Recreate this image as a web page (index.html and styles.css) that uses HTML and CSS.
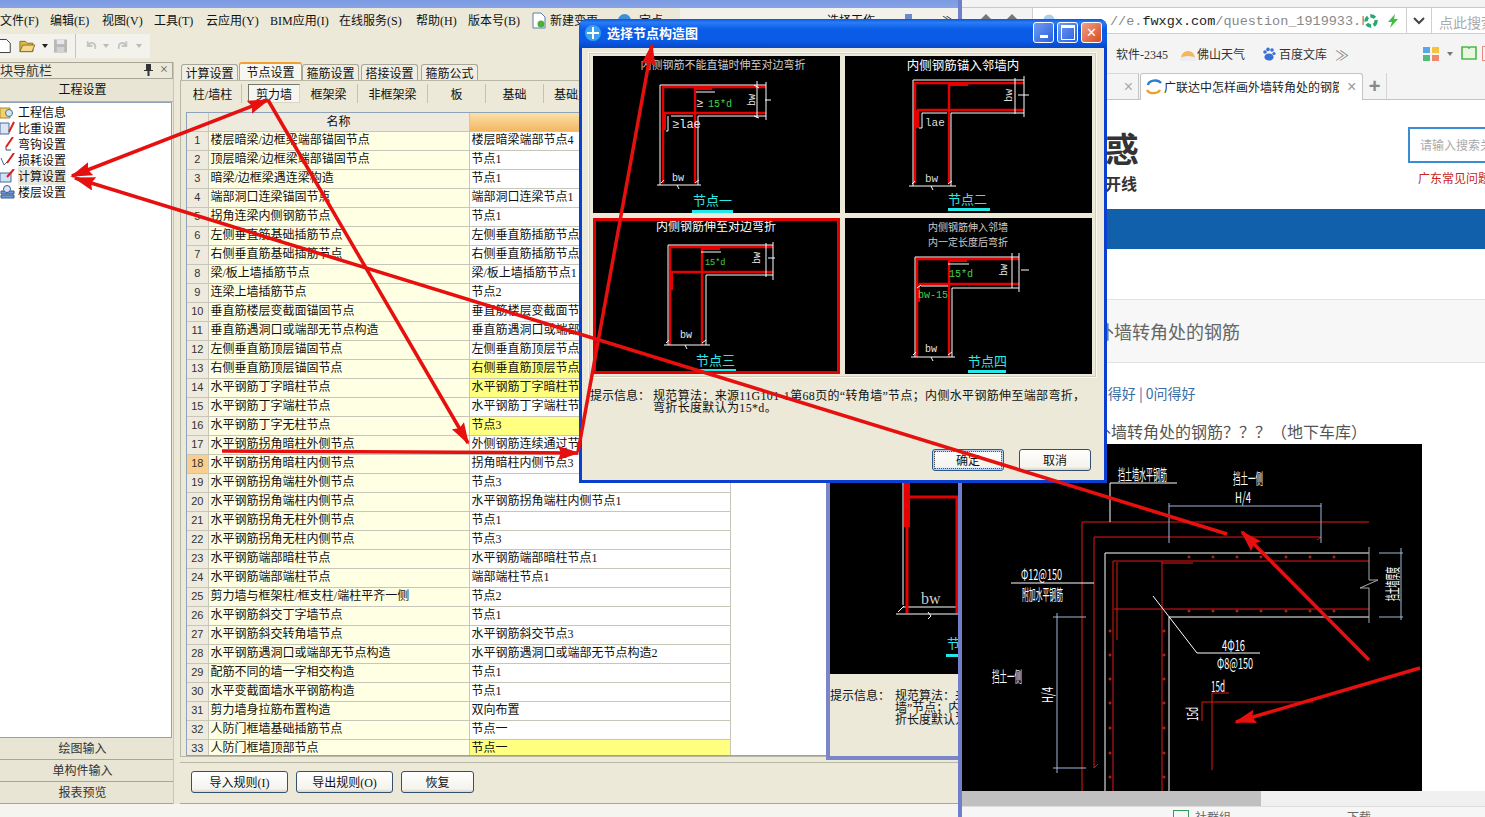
FILE: index.html
```html
<!DOCTYPE html>
<html lang="zh">
<head>
<meta charset="utf-8">
<title>选择节点构造图</title>
<link rel="stylesheet" href="styles.css">
</head>
<body>
<div class="desk">

<section class="browser">
  <div class="b-top"></div>
  <div class="b-addr">
    <div class="b-nav"><span class="b-nav-i"></span><span class="b-nav-i"></span></div>
    <div class="b-url"><svg class="u-fav" width="12" height="12" viewBox="0 0 12 12"><circle cx="6" cy="6" r="5.500" fill="#a9d0ee"/></svg><span class="u-g">//e.</span><span class="u-d">fwxgx.com</span><span class="u-g">/question_1919933.h</span>
      <svg class="u-ic" width="14" height="14" viewBox="0 0 14 14"><circle cx="7" cy="7" r="5" fill="none" stroke="#2aa772" stroke-width="3.4" stroke-dasharray="5 2.4"/></svg>
      <svg class="u-ic2" width="12" height="14" viewBox="0 0 12 14"><path d="M8 0 1 8h4l-2 6 8-9H7z" fill="#3fbf3f"/></svg>
    </div>
    <div class="b-drop"><svg width="12" height="8" viewBox="0 0 12 8"><path d="M1 1l5 5 5-5" fill="none" stroke="#444" stroke-width="2"/></svg></div>
    <div class="b-search">点此搜索</div>
  </div>
  <div class="b-marks">
    <span class="m-soft">软件-2345</span>
    <svg class="m-ic" width="16" height="16" viewBox="0 0 16 16"><path d="M1 12a7 7 0 0 1 14 0z" fill="#f7b65a"/><path d="M0 12q8-4 16 0v3H0z" fill="#e8eef4"/></svg>
    <span class="m-w">佛山天气</span>
    <svg class="m-ic2" width="14" height="14" viewBox="0 0 14 14"><g fill="#3a6fd8"><circle cx="3" cy="5" r="1.8"/><circle cx="6" cy="2.4" r="1.8"/><circle cx="10" cy="3" r="1.8"/><circle cx="12" cy="6.5" r="1.6"/><ellipse cx="7" cy="10" rx="4.6" ry="3.6"/></g></svg>
    <span class="m-w">百度文库</span>
    <span class="m-more">≫</span>
    <svg class="m-apps" width="18" height="16" viewBox="0 0 18 16"><rect x="0" y="1" width="7" height="6" fill="#59a7e8"/><rect x="9" y="1" width="7" height="6" fill="#f5c33c"/><rect x="0" y="9" width="7" height="6" fill="#52bd7a"/><rect x="9" y="9" width="7" height="6" fill="#f08a6a"/></svg>
    <span class="m-caret"></span>
    <svg class="m-book" width="16" height="15" viewBox="0 0 16 15"><path d="M1 1h6l1 1 1-1h6v12H1z" fill="#e8f8e0" stroke="#4cb648" stroke-width="1.6"/></svg>
    <span class="m-red"></span>
  </div>
  <div class="b-tabs">
    <div class="t-old">×</div>
    <div class="t-cur">
      <svg width="16" height="16" viewBox="0 0 16 16"><path d="M2 6a7 5 0 0 1 13-2" fill="none" stroke="#2a7fc8" stroke-width="2.4"/><path d="M1 11a7 5 0 0 0 13 0" fill="none" stroke="#e8a030" stroke-width="2.4"/></svg>
      <span class="t-title">广联达中怎样画外墙转角处的钢筋</span>
      <span class="t-x">×</span>
    </div>
    <div class="t-plus">+</div>
  </div>
  <div class="b-page">
    <div class="p-head">
      <div class="p-logo"><div class="p-big">惑</div><div class="p-sub">开线</div></div>
      <div class="p-find"><div class="p-box">请输入搜索关键词</div><div class="p-hot">广东常见问题</div></div>
    </div>
    <div class="p-bar"></div>
    <div class="p-title">外墙转角处的钢筋</div>
    <div class="p-stat">0问得好 | 0问得好</div>
    <div class="p-q">外墙转角处的钢筋？？？（地下车库）</div>
    <svg class="cad" width="460" height="347" viewBox="962 444 460 347">
      <rect x="962" y="444" width="460" height="347" fill="#000"/>
      <g class="cr">
        <path d="M1082 791V522H1369"/>
        <path d="M1094 768V537H1321M1094 768l4-4M1321 537l-4 3"/>
        <path d="M1113 791V561H1369"/>
        <path d="M1162 791V561"/>
        <path d="M1114 609H1369"/>
        <path d="M1117 562V640"/>
        <path d="M1162 563H1193"/>
        <path d="M1229 693H1212V770"/>
        <path d="M1202 721V702H1313"/>
      </g>
      <g class="cdots">
        <circle cx="1189" cy="557" r="1"/><circle cx="1213" cy="557" r="1"/><circle cx="1237" cy="557" r="1"/><circle cx="1261" cy="557" r="1"/><circle cx="1286" cy="557" r="1"/><circle cx="1310" cy="557" r="1"/><circle cx="1334" cy="557" r="1"/>
        <circle cx="1189" cy="611" r="1"/><circle cx="1213" cy="611" r="1"/><circle cx="1237" cy="611" r="1"/><circle cx="1261" cy="611" r="1"/><circle cx="1286" cy="611" r="1"/><circle cx="1310" cy="611" r="1"/><circle cx="1334" cy="611" r="1"/>
        <circle cx="1110" cy="631" r="1"/><circle cx="1110" cy="655" r="1"/><circle cx="1110" cy="679" r="1"/><circle cx="1110" cy="703" r="1"/><circle cx="1110" cy="728" r="1"/><circle cx="1110" cy="753" r="1"/><circle cx="1110" cy="777" r="1"/>
        <circle cx="1164" cy="631" r="1"/><circle cx="1164" cy="655" r="1"/><circle cx="1164" cy="679" r="1"/><circle cx="1164" cy="703" r="1"/><circle cx="1164" cy="728" r="1"/><circle cx="1164" cy="753" r="1"/><circle cx="1164" cy="777" r="1"/>
      </g>
      <g class="cw">
        <path d="M1105 791V553H1369"/>
        <path d="M1169 791V617H1369"/>
        <path d="M1177 483H1110V522"/>
        <path d="M1011 583H1094"/>
        <path d="M1153 596L1197 653H1260"/>
      </g>
      <g class="cb">
        <path d="M1169 506H1321M1169 503V543M1321 503V543"/>
        <path d="M1379 553H1403M1379 617H1403M1401 548V620"/>
        <path d="M1053 617H1086M1053 768H1086M1057 613V773"/>
      </g>
      <path class="cg" d="M1369 547V580H1378L1360 588H1369V623"/>
      <g class="ct">
        <text x="1118" y="480" textLength="49" lengthAdjust="spacingAndGlyphs">挡土墙水平钢筋</text>
        <text x="1233" y="484" textLength="30" lengthAdjust="spacingAndGlyphs">挡土一侧</text>
        <text x="1235" y="503" textLength="16" lengthAdjust="spacingAndGlyphs">H/4</text>
        <text x="1021" y="580" textLength="41" lengthAdjust="spacingAndGlyphs">Φ12@150</text>
        <text x="1022" y="600" textLength="41" lengthAdjust="spacingAndGlyphs">附加水平钢筋</text>
        <text x="992" y="682" textLength="30" lengthAdjust="spacingAndGlyphs">挡土一侧</text>
        <text x="1222" y="651" textLength="23" lengthAdjust="spacingAndGlyphs">4Φ16</text>
        <text x="1217" y="669" textLength="36" lengthAdjust="spacingAndGlyphs">Φ8@150</text>
        <text x="1211" y="692" textLength="14" lengthAdjust="spacingAndGlyphs">15d</text>
        <text transform="translate(1053 703) rotate(-90)" textLength="16" lengthAdjust="spacingAndGlyphs">H/4</text>
        <text transform="translate(1198 721) rotate(-90)" textLength="14" lengthAdjust="spacingAndGlyphs">15d</text>
        <text transform="translate(1398 601) rotate(-90)" textLength="34" lengthAdjust="spacingAndGlyphs">挡土墙厚度</text>
      </g>
    </svg>
    <div class="p-scroll"><div class="p-thumb"></div></div>
    <div class="p-status"><span class="s-box"></span><span>社群组</span><span class="s-gap">下载</span></div>
  </div>
</section>

<section class="app">
  <div class="a-title"></div>
  <div class="a-menu">
    <span>文件(F)</span><span>编辑(E)</span><span>视图(V)</span><span>工具(T)</span><span>云应用(Y)</span><span>BIM应用(I)</span><span>在线服务(S)</span><span>帮助(H)</span><span>版本号(B)</span>
    <span class="a-new"><svg width="14" height="17" viewBox="0 0 14 17"><path d="M1 1h8l4 4v11H1z" fill="#fff" stroke="#5a7fb0"/><circle cx="9" cy="12" r="3.5" fill="#4cae3c"/></svg>新建变更</span>
    <span class="a-cloud"><i></i>定点</span>
    <div class="a-strip"><span>选择工作</span><b></b><span>≫</span></div>
  </div>
  <div class="a-tools">
    <div class="a-tbar">
      <svg width="12" height="16" viewBox="0 0 12 16"><path d="M-2 1h9l4 4v10H-2z" fill="#fff" stroke="#333"/></svg>
      <svg class="t-open" width="18" height="16" viewBox="0 0 18 16"><path d="M1 3h6l2 2h6v9H1z" fill="#e0b850" stroke="#8a6a20"/><path d="M4 7h13l-3 7H1z" fill="#f4d98a" stroke="#8a6a20"/></svg>
      <span class="t-caret"></span>
      <svg class="t-save" width="14" height="14" viewBox="0 0 14 14"><path d="M0 0h14v14H0z" fill="#b8b8b8"/><path d="M3 0h8v5H3z" fill="#e6e6e6"/><path d="M3 8h8v6H3z" fill="#d2d2d2"/></svg>
      <span class="t-sep"></span>
      <svg class="t-undo" width="14" height="14" viewBox="0 0 14 14"><path d="M4 2v5h5M4 7c3-5 9-4 8 3" fill="none" stroke="#c4c4c4" stroke-width="2"/></svg>
      <span class="t-caret t-off"></span>
      <svg class="t-undo" width="14" height="14" viewBox="0 0 14 14"><path d="M10 2v5H5M10 7C7 2 1 3 2 10" fill="none" stroke="#c4c4c4" stroke-width="2"/></svg>
      <span class="t-caret t-off"></span>
    </div>
  </div>
  <div class="a-body">
    <aside class="nav">
      <div class="nav-h"><span>模块导航栏</span>
        <svg class="nav-pin" width="9" height="12" viewBox="0 0 9 12"><path d="M2 0h5v6h2v1H5.500v5h-2V7H0V6h2z" fill="#333"/></svg>
        <span class="nav-x">×</span></div>
      <div class="nav-sec">工程设置</div>
      <ul class="nav-list">
        <li><svg width="15" height="14" viewBox="0 0 15 14"><path d="M0 3h10v10H0z" fill="#f3d26c" stroke="#a88a30"/><circle cx="9" cy="8" r="3.5" fill="#cfe4f5" stroke="#55708a"/></svg>工程信息</li>
        <li><svg width="15" height="14" viewBox="0 0 15 14"><path d="M0 2h9v11H0z" fill="#dde6f2" stroke="#4a6a9a"/><path d="M14 1 9 11" stroke="#d82020" stroke-width="2"/></svg>比重设置</li>
        <li><svg width="15" height="14" viewBox="0 0 15 14"><path d="M6 10v3h5" fill="none" stroke="#456"/><path d="M13 0 6 10" stroke="#d82020" stroke-width="2"/></svg>弯钩设置</li>
        <li><svg width="15" height="14" viewBox="0 0 15 14"><path d="M1 5l3 7 4-4" fill="none" stroke="#4a6a9a"/><path d="M14 0 7 10" stroke="#d82020" stroke-width="2"/></svg>损耗设置</li>
        <li class="nav-on"><svg width="15" height="14" viewBox="0 0 15 14"><path d="M0 4h11v9H0z" fill="#cfe2f5" stroke="#4a6a9a"/><path d="M14 0 7 8" stroke="#d82020" stroke-width="2"/></svg><span>计算设置</span></li>
        <li><svg width="15" height="14" viewBox="0 0 15 14"><path d="M1 6h13v3H1zM1 10h13v3H1z" fill="#6f9ad8" stroke="#3a5a90"/><circle cx="7" cy="4" r="3.5" fill="#d8e6f8" stroke="#3a5a90"/></svg>楼层设置</li>
      </ul>
      <div class="nav-tabs"><div>绘图输入</div><div>单构件输入</div><div>报表预览</div></div>
    </aside>
    <main class="work">
      <div class="w-tabs">
        <span class="w-tab">计算设置</span><span class="w-tab w-cur">节点设置</span><span class="w-tab">箍筋设置</span><span class="w-tab">搭接设置</span><span class="w-tab">箍筋公式</span>
      </div>
      <div class="w-panel">
        <div class="w-sub">
          <span>柱/墙柱</span><span class="w-sub-on">剪力墙</span><span>框架梁</span><span class="w-wide">非框架梁</span><span>板</span><span>基础</span><span>基础主梁</span>
        </div>
        <div class="w-grid">
          <table class="rules">
            <colgroup><col class="c1"><col class="c2"><col class="c3"></colgroup>
            <thead><tr><th></th><th>名称</th><th class="h-sel"></th></tr></thead>
            <tbody>
              <tr><td>1</td><td>楼层暗梁/边框梁端部锚固节点</td><td>楼层暗梁端部节点4</td></tr>
              <tr><td>2</td><td>顶层暗梁/边框梁端部锚固节点</td><td>节点1</td></tr>
              <tr><td>3</td><td>暗梁/边框梁遇连梁构造</td><td>节点1</td></tr>
              <tr><td>4</td><td>端部洞口连梁锚固节点</td><td>端部洞口连梁节点1</td></tr>
              <tr><td>5</td><td>拐角连梁内侧钢筋节点</td><td>节点1</td></tr>
              <tr><td>6</td><td>左侧垂直筋基础插筋节点</td><td>左侧垂直筋插筋节点</td></tr>
              <tr><td>7</td><td>右侧垂直筋基础插筋节点</td><td>右侧垂直筋插筋节点</td></tr>
              <tr><td>8</td><td>梁/板上墙插筋节点</td><td>梁/板上墙插筋节点1</td></tr>
              <tr><td>9</td><td>连梁上墙插筋节点</td><td>节点2</td></tr>
              <tr><td>10</td><td>垂直筋楼层变截面锚固节点</td><td>垂直筋楼层变截面节点</td></tr>
              <tr><td>11</td><td>垂直筋遇洞口或端部无节点构造</td><td>垂直筋遇洞口或端部无节点</td></tr>
              <tr><td>12</td><td>左侧垂直筋顶层锚固节点</td><td>左侧垂直筋顶层节点</td></tr>
              <tr class="r-y"><td>13</td><td>右侧垂直筋顶层锚固节点</td><td>右侧垂直筋顶层节点</td></tr>
              <tr class="r-y"><td>14</td><td>水平钢筋丁字暗柱节点</td><td>水平钢筋丁字暗柱节点</td></tr>
              <tr><td>15</td><td>水平钢筋丁字端柱节点</td><td>水平钢筋丁字端柱节点</td></tr>
              <tr class="r-y"><td>16</td><td>水平钢筋丁字无柱节点</td><td>节点3</td></tr>
              <tr><td>17</td><td>水平钢筋拐角暗柱外侧节点</td><td>外侧钢筋连续通过节点</td></tr>
              <tr class="r-cur"><td>18</td><td>水平钢筋拐角暗柱内侧节点</td><td>拐角暗柱内侧节点3</td></tr>
              <tr><td>19</td><td>水平钢筋拐角端柱外侧节点</td><td>节点3</td></tr>
              <tr><td>20</td><td>水平钢筋拐角端柱内侧节点</td><td>水平钢筋拐角端柱内侧节点1</td></tr>
              <tr><td>21</td><td>水平钢筋拐角无柱外侧节点</td><td>节点1</td></tr>
              <tr><td>22</td><td>水平钢筋拐角无柱内侧节点</td><td>节点3</td></tr>
              <tr><td>23</td><td>水平钢筋端部暗柱节点</td><td>水平钢筋端部暗柱节点1</td></tr>
              <tr><td>24</td><td>水平钢筋端部端柱节点</td><td>端部端柱节点1</td></tr>
              <tr><td>25</td><td>剪力墙与框架柱/框支柱/端柱平齐一侧</td><td>节点2</td></tr>
              <tr><td>26</td><td>水平钢筋斜交丁字墙节点</td><td>节点1</td></tr>
              <tr><td>27</td><td>水平钢筋斜交转角墙节点</td><td>水平钢筋斜交节点3</td></tr>
              <tr><td>28</td><td>水平钢筋遇洞口或端部无节点构造</td><td>水平钢筋遇洞口或端部无节点构造2</td></tr>
              <tr><td>29</td><td>配筋不同的墙一字相交构造</td><td>节点1</td></tr>
              <tr><td>30</td><td>水平变截面墙水平钢筋构造</td><td>节点1</td></tr>
              <tr><td>31</td><td>剪力墙身拉筋布置构造</td><td>双向布置</td></tr>
              <tr><td>32</td><td>人防门框墙基础插筋节点</td><td>节点一</td></tr>
              <tr class="r-y"><td>33</td><td>人防门框墙顶部节点</td><td>节点一</td></tr>
            </tbody>
          </table>
        </div>
      </div>
      <div class="w-foot">
        <button class="xp-btn b-a">导入规则(I)</button><button class="xp-btn b-a">导出规则(O)</button><button class="xp-btn b-c">恢复</button>
      </div>
    </main>
  </div>
  <div class="a-status"></div>

  <div class="back-dlg">
    <svg class="back-pic" width="128" height="274" viewBox="830 400 128 274">
      <rect x="830" y="400" width="128" height="274" fill="#000"/>
      <path class="n-w" d="M903 400V605M903 607H958M896 614H958M898 612l6-6M928 612l3 4-3 3"/>
      <path d="M907 400V527" stroke="#e60000" stroke-width="6"/>
      <path d="M907 527V613M910 497H958M957 497V613" stroke="#e60000" stroke-width="3" fill="none"/>
      <text class="n-lat-b" x="921" y="604">bw</text>
      <text class="n-lab" x="947" y="648">节点</text>
      <rect x="946" y="654" width="12" height="3" fill="#22e8e8"/>
    </svg>
    <div class="back-hint">
      <span class="back-l">提示信息：</span>
      <p class="back-t">规范算法：来源11G101-1第68页的“转角<br>墙”节点；内侧水平钢筋伸至端部弯<br>折长度默认为15*d。</p>
    </div>
  </div>
</section>

<section class="dlg">
  <header class="d-title">
    <svg width="18" height="18" viewBox="0 0 18 18"><circle cx="9" cy="9" r="8" fill="#3aa0ee"/><path d="M9 3v12M3 9h12" stroke="#fff" stroke-width="2"/></svg>
    <span>选择节点构造图</span>
    <div class="d-ctl"><i class="c-min"></i><i class="c-max"></i><i class="c-cls">✕</i></div>
  </header>
  <div class="d-body">
    <div class="d-group">
      <figure class="n-pan">
        <svg width="247" height="157" viewBox="0 0 247 157">
          <text class="n-t-s" x="130" y="13" text-anchor="middle">内侧钢筋不能直锚时伸至对边弯折</text>
          <path class="n-r" d="M173 31H70V127M102 31V127M71 57H173"/>
          <path class="n-rk" d="M102 32H119M71 57V74"/>
          <path class="n-w" d="M64 129H108M67 129V29H173M173 60H105V129M173 26V64M164 25V62M161 29l5 3M161 60l5 2M172 44h6M103 36H122M75 60V75H73M78 60H100M68 127l3-3M102 127l4-3M84 129l2 4"/>
          <text class="n-lat-s" x="103" y="51">≥</text>
          <text class="n-g" x="115" y="51">15*d</text>
          <text class="n-lat-s" x="79" y="72">≥lae</text>
          <text class="n-lat-x" transform="translate(162 50) rotate(-90)">bw</text>
          <text class="n-lat-x" x="79" y="125">bw</text>
          <text class="n-lab" x="100" y="149">节点一</text>
          <rect x="99" y="154" width="41" height="3" fill="#22e8e8"/>
        </svg>
      </figure>
      <figure class="n-pan">
        <svg width="247" height="157" viewBox="0 0 247 157">
          <text class="n-t" x="118" y="14" text-anchor="middle">内侧钢筋锚入邻墙内</text>
          <path class="n-r" d="M179 27H70V127M104 27V127M72 54H179"/>
          <path class="n-rk" d="M104 28H123M72 54V72"/>
          <path class="n-w" d="M64 130H111M68 130V24H179M179 57H106V130M170 22V58M179 20V61M173 39H184M77 57V72H74M77 57H102M67 128l3-3M103 128l4-3M86 130l2 4"/>
          <text class="n-lat" x="80" y="70">lae</text>
          <text class="n-lat" transform="translate(167 46) rotate(-90)">bw</text>
          <text class="n-lat" x="80" y="126">bw</text>
          <text class="n-lab" x="103" y="148">节点二</text>
          <rect x="103" y="152" width="42" height="3" fill="#22e8e8"/>
        </svg>
      </figure>
      <figure class="n-pan n-sel">
        <svg width="247" height="156" viewBox="0 0 247 156">
          <text class="n-t-m" x="123" y="13" text-anchor="middle">内侧钢筋伸至对边弯折</text>
          <path class="n-r" d="M180 29H77V127M109 29V127M77 54H180"/>
          <path class="n-rk" d="M109 30H127M78 54V72"/>
          <path class="n-w" d="M71 127H117M75 127V27H180M180 57H113V127M173 25V59M180 24V62M175 40H182M108 34H128M73 125l3-3M109 125l4-3M92 127l2 4"/>
          <text class="n-g-s" x="112" y="47">15*d</text>
          <text class="n-lat-x" transform="translate(167 46) rotate(-90)">bw</text>
          <text class="n-lat-x" x="87" y="120">bw</text>
          <text class="n-lab" x="103" y="147">节点三</text>
          <rect x="105" y="151" width="38" height="3" fill="#22e8e8"/>
        </svg>
      </figure>
      <figure class="n-pan">
        <svg width="247" height="156" viewBox="0 0 247 156">
          <text class="n-t-x" x="123" y="13" text-anchor="middle">内侧钢筋伸入邻墙</text>
          <text class="n-t-x" x="123" y="28" text-anchor="middle">内一定长度后弯折</text>
          <path class="n-r" d="M174 41H72V139M104 41V139M74 66H174"/>
          <path class="n-rk" d="M104 42H122M73 66V84"/>
          <path class="n-w" d="M66 139H110M70 139V39H174M174 70H107V139M167 35V70M174 35V74M176 52H184M103 46H124M72 70l4-3 M76 68H103M68 137l3-3M103 137l4-3M86 139l2 4"/>
          <text class="n-g" x="104" y="59">15*d</text>
          <text class="n-g" x="73" y="80">bw-15</text>
          <text class="n-lat-x" transform="translate(162 58) rotate(-90)">bw</text>
          <text class="n-lat-x" x="80" y="134">bw</text>
          <text class="n-lab" x="123" y="148">节点四</text>
          <rect x="123" y="152" width="38" height="3" fill="#22e8e8"/>
        </svg>
      </figure>
    </div>
    <div class="d-hint">
      <span class="d-hint-l">提示信息：</span>
      <p>规范算法：来源11G101-1第68页的“转角墙”节点；内侧水平钢筋伸至端部弯折，<br>弯折长度默认为15*d。</p>
    </div>
    <div class="d-foot">
      <button class="xp-btn d-ok">确定</button><button class="xp-btn d-no">取消</button>
    </div>
  </div>
</section>

<svg class="arrows" width="1485" height="817" viewBox="0 0 1485 817">
  <defs>
    <marker id="head" markerUnits="userSpaceOnUse" markerWidth="24" markerHeight="16" refX="20" refY="7" orient="auto-start-reverse">
      <path d="M0 0 22 7 0 14 3 7z" fill="#e6100f"/>
    </marker>
  </defs>
  <line class="arw" x1="72" y1="176" x2="268" y2="100" marker-start="url(#head)" marker-end="url(#head)"/>
  <line class="arw" x1="268" y1="100" x2="468" y2="443" marker-end="url(#head)"/>
  <line class="arw" x1="1227" y1="534" x2="75" y2="178" marker-end="url(#head)"/>
  <line class="arw" x1="222" y1="451" x2="578" y2="453" marker-end="url(#head)"/>
  <line class="arw" x1="578" y1="452" x2="652" y2="45" marker-end="url(#head)"/>
  <line class="arw" x1="1369" y1="660" x2="1242" y2="532" marker-end="url(#head)"/>
  <line class="arw" x1="1420" y1="668" x2="1236" y2="722" marker-end="url(#head)"/>
</svg>

</div>
</body>
</html>
```

FILE: styles.css
```css
* { box-sizing: border-box; }
html, body { margin: 0; padding: 0; }
body {
  width: 1485px; height: 817px; overflow: hidden; background: #fff;
  font-family: "Liberation Serif", "Noto Sans CJK SC", sans-serif;
  font-size: 12px; color: #111;
}
.desk { position: relative; width: 1485px; height: 817px; overflow: hidden; }

/* ---------- application window ---------- */
.app {
  position: absolute; left: 0; top: 0; width: 962px; height: 817px;
  display: flex; flex-direction: column; background: #ece9d8;
  border-right: 4px solid #6f7fce; overflow: hidden;
}
.a-title { height: 8px; background: linear-gradient(#7d9be2, #86a3e6); flex: none; }
.a-menu { height: 22px; flex: none; display: grid; grid-template-columns: 50px 52px 52px 52px 64px 69px 77px 52px 64px 86px 62px 1fr; align-items: center; padding-top: 2px; background: #ece9d8; white-space: nowrap; }
.a-new { display: flex; align-items: center; gap: 4px; }
.a-cloud { display: flex; align-items: center; gap: 8px; }
.a-cloud i { width: 13px; height: 13px; border-radius: 50%; background: #3f8fd8; }
.a-strip { align-self: stretch; margin-top: -2px; background: #f2f1ec; display: flex; align-items: center; justify-content: flex-end; gap: 30px; padding: 2px 4px 0 0; }
.a-strip b { width: 7px; height: 12px; background: #6a8ac8; }
.a-tools { height: 32px; flex: none; padding-top: 4px; }
.a-tbar { width: 150px; height: 24px; background: #f3f2ec; display: flex; align-items: center; overflow: hidden; }
.t-open { margin-left: 8px; }
.t-caret { margin-left: 6px; width: 0; height: 0; border: 3px solid transparent; border-top: 4px solid #222; border-bottom: 0; }
.t-off { border-top-color: #bbb; margin-right: 8px; }
.t-save { margin-left: 6px; }
.t-sep { width: 1px; height: 24px; background: #c8c6b8; margin: 0 8px; }
.a-body { flex: 1; min-height: 0; display: flex; }
.a-status { height: 13px; flex: none; background: #f6f4ee; }

.nav { width: 174px; flex: none; display: flex; flex-direction: column; border-right: 1px solid #c9c6b6; }
.nav-h { height: 17px; flex: none; display: flex; align-items: center; border: 1px solid #a8a698; border-left: 0; padding-bottom: 2px; font-size: 13px; color: #333; overflow: hidden; }
.nav-h > span:first-child { margin-left: -13px; }
.nav-pin { margin-left: auto; flex: none; }
.nav-x { margin: 0 4px 0 7px; font-size: 14px; color: #555; }
.nav-sec { height: 23px; flex: none; display: flex; align-items: center; justify-content: center; padding: 0 8px 2px 0; background: #e8e5d5; border-bottom: 1px solid #b5b2a2; }
.nav-list { flex: 1; margin: 0 1px 0 0; padding: 1px 0 0; list-style: none; background: #fff; border: 1px solid #8fa3b8; border-left: 0; }
.nav-list li { height: 16px; display: flex; align-items: center; gap: 3px; }
.nav-list li svg { flex: none; }
.nav-on span { background: #e8e8e0; }
.nav-tabs { flex: none; background: #e8e5d5; }
.nav-tabs div { height: 22px; display: flex; align-items: center; justify-content: center; padding: 0 8px 2px 0; border-bottom: 1px solid #a8a698; color: #333; }

.work { flex: 1; min-width: 0; padding-left: 6px; display: flex; flex-direction: column; }
.w-tabs { height: 18px; flex: none; display: flex; align-items: flex-end; padding-left: 1px; position: relative; z-index: 1; }
.w-tab { height: 16px; width: 57px; margin-right: 3px; display: flex; align-items: center; justify-content: center; background: #f0eee2; border: 1px solid #a9a799; border-bottom: 0; border-radius: 3px 3px 0 0; }
.w-tab:nth-child(1) { margin-right: 1px; }
.w-tab:nth-child(3) { margin-right: 2px; }
.w-cur { height: 18px; width: 63px; margin-right: 0; background: #f7f6ef; border-top: 2px solid #f0a030; }
.w-panel { height: 677px; flex: none; border: 1px solid #b9b7a6; border-right: 0; padding: 3px 0 0 1px; display: flex; flex-direction: column; }
.w-sub { height: 19px; flex: none; display: flex; padding-left: 2px; }
.w-sub span { width: 58px; flex: none; display: flex; align-items: center; justify-content: center; border-right: 1px solid #c4c2b2; white-space: nowrap; overflow: hidden; }
.w-sub .w-wide { width: 70px; }
.w-sub .w-sub-on { margin-left: 6px; width: 52px; background: #f6f5ef; border: 1px solid #77766a; border-right-color: #d8d6c8; border-bottom-color: #d8d6c8; }
.w-sub span:last-child { width: 70px; justify-content: flex-start; padding-left: 10px; }
.w-grid { margin: 9px 0 0 4px; height: 644px; background: #fff; border: 1px solid #8fa3b8; border-right: 0; overflow: hidden; }
.rules { border-collapse: collapse; table-layout: fixed; width: 543px; }
.c1 { width: 21px; } .c2 { width: 261px; } .c3 { width: 261px; }
.rules th { height: 18px; padding: 0; font-weight: normal; font-size: 12px; line-height: 14px; background: #eeeade; border: 1px solid #c9c7b8; border-top: 0; }
.rules th:first-child { border-left: 0; }
.rules .h-sel { background: linear-gradient(#fbe0a8, #f3b763); }
.rules td { height: 19px; padding: 0 0 2px 2px; line-height: 14px; border: 1px solid #c8c6b8; white-space: nowrap; overflow: hidden; background: #fff; }
.rules td:first-child { border-left: 0; padding: 0 0 1px; text-align: center; background: #eeeade; color: #333; font-family: "Liberation Sans", sans-serif; font-size: 11px; }
.rules td:nth-child(2) { background: #ffffe3; }
.rules .r-y td:nth-child(3) { background: #ffff80; }
.rules .r-cur td:first-child { background: #f8cf8c; }
.w-foot { height: 42px; flex: none; margin-top: 5px; border-top: 1px solid #b9b7a6; border-bottom: 1px solid #a8a698; padding: 8px 0 0 11px; display: flex; gap: 8px; align-items: flex-start; }
.xp-btn { height: 22px; padding: 0; font: inherit; color: #111; background: linear-gradient(#fff, #f4f3ec 85%, #d8d5c6); border: 1px solid #34506f; border-radius: 3px; }
.b-a { width: 97px; } .b-c { width: 73px; }

.back-dlg { position: absolute; left: 826px; top: 400px; width: 132px; height: 360px; background: #ece9d8; border: 4px solid #7a86c8; border-right: 0; border-top: 0; display: flex; flex-direction: column; }
.back-pic { flex: none; display: block; }
.back-hint { margin-top: 16px; display: flex; line-height: 12px; white-space: nowrap; }
.back-l { flex: none; width: 65px; }
.back-t { flex: none; margin: 0; }

/* ---------- foreground dialog ---------- */
.dlg { position: absolute; left: 579px; top: 19px; width: 528px; height: 464px; background: #0a3fd0; border-radius: 8px 8px 0 0; padding: 0 3px 3px; display: flex; flex-direction: column; }
.d-title { height: 29px; flex: none; margin: 0 -3px; padding: 0 5px 2px 3px; border-radius: 8px 8px 0 0; background: linear-gradient(#0a57e0, #2a7cf4 12%, #0a5de8 35%, #0a5ae6 75%, #0648c8); display: flex; align-items: center; gap: 5px; color: #fff; font-weight: bold; font-size: 13px; }
.d-title > svg { margin-left: 2px; }
.d-ctl { margin-left: auto; display: flex; gap: 3px; }
.d-ctl i { width: 21px; height: 21px; border: 1px solid #fff; border-radius: 3px; background: linear-gradient(135deg, #6f9df0, #2a5fe0); display: flex; align-items: center; justify-content: center; font-style: normal; color: #fff; font-size: 13px; }
.d-ctl .c-min::after { content: ""; width: 8px; height: 3px; background: #fff; margin-top: 8px; }
.d-ctl .c-max::after { content: ""; width: 12px; height: 11px; border: 1px solid #fff; border-top-width: 3px; }
.d-ctl .c-cls { background: linear-gradient(135deg, #f0a08a, #d84a20); font-family: "DejaVu Sans", sans-serif; font-weight: bold; }
.d-body { flex: 1; min-height: 0; background: #ece9d8; display: flex; flex-direction: column; padding: 4px 7px 9px 6px; }
.d-group { width: 509px; height: 326px; flex: none; padding: 3px 4px; border: 1px solid #f8f7f0; box-shadow: inset 0 0 0 1px #d4d0c0; display: grid; grid-template-columns: 247px 247px; grid-template-rows: 157px 156px; gap: 5px; }
.n-pan { margin: 0; background: #000; overflow: hidden; }
.n-pan svg { display: block; }
.n-sel { outline: 3px solid #e00000; outline-offset: -3px; }
.n-r { fill: none; stroke: #e60000; stroke-width: 2.4; }
.n-rk { fill: none; stroke: #e60000; stroke-width: 4; }
.n-w { fill: none; stroke: #fff; stroke-width: 1; }
.n-t { fill: #fff; font-size: 12.5px; }
.n-t-m { fill: #fff; font-size: 12px; }
.n-t-s { fill: #ccc; font-size: 11px; }
.n-t-x { fill: #ccc; font-size: 10px; }
.n-lat { fill: #ddd; font-size: 11px; font-family: "Liberation Mono", monospace; }
.n-lat-s { fill: #e8e8e8; font-size: 12px; font-family: "Liberation Mono", monospace; }
.n-lat-x { fill: #e8e8e8; font-size: 10px; font-family: "Liberation Mono", monospace; }
.n-lat-b { fill: #ccc; font-size: 16px; font-family: "Liberation Serif", serif; }
.n-g { fill: #3fd24a; font-size: 10px; font-family: "Liberation Mono", monospace; }
.n-g-s { fill: #3fd24a; font-size: 8.5px; font-family: "Liberation Mono", monospace; }
.n-lab { fill: #2ee6e6; font-size: 13px; }
.d-hint { margin: 12px 0 0 2px; display: flex; line-height: 12px; }
.d-hint-l { flex: none; width: 63px; }
.d-hint p { margin: 0; white-space: nowrap; letter-spacing: .33px; }
.d-foot { margin-top: auto; display: flex; justify-content: flex-end; gap: 15px; padding-right: 6px; }
.d-ok { width: 72px; border-color: #2a5a96; outline: 1px dotted #555; outline-offset: -3px; box-shadow: inset 0 0 0 2px #b9d0ee; }
.d-no { width: 72px; }

/* ---------- browser window ---------- */
.browser { position: absolute; left: 962px; top: 0; width: 523px; height: 817px; background: #fff; display: flex; flex-direction: column; overflow: hidden; }
.b-top { height: 8px; flex: none; background: #f3f3f3; border-bottom: 1px solid #c9c9c9; }
.b-addr { height: 26px; flex: none; display: flex; background: #f3f3f3; border-bottom: 1px solid #cfcfcf; }
.b-nav { width: 70px; flex: none; display: flex; gap: 14px; padding: 6px 0 0 18px; }
.b-nav-i { width: 12px; height: 12px; background: #777; clip-path: polygon(50% 0, 100% 50%, 50% 100%, 0 50%); }
.b-url { width: 375px; flex: none; position: relative; background: #fff; padding: 4px 0 0 77px; font: 13.5px/20px "Liberation Mono", monospace; color: #888; white-space: nowrap; overflow: hidden; border-right: 1px solid #cfcfcf; border-left: 1px solid #cfcfcf; }
.u-d { color: #222; }
.u-fav { position: absolute; left: 10px; top: 6px; }
.u-ic { position: absolute; right: 28px; top: 6px; background: #fff; }
.u-ic2 { position: absolute; right: 7px; top: 6px; background: #fff; }
.b-drop { width: 25px; flex: none; background: #fff; border-right: 1px solid #cfcfcf; display: flex; align-items: center; justify-content: center; }
.b-search { flex: 1; background: #fff; padding: 4px 0 0 7px; color: #aaa; font-size: 14px; white-space: nowrap; overflow: hidden; }
.b-marks { height: 39px; flex: none; background: #f4f4f4; display: flex; align-items: center; padding-left: 154px; color: #333; font-size: 12px; white-space: nowrap; }
.b-marks > * { flex: none; }
.m-ic { margin-left: 12px; } .m-w { margin-left: 1px; }
.m-ic2 { margin-left: 17px; margin-right: 2px; }
.m-more { margin-left: 8px; color: #888; font-size: 14px; }
.m-apps { margin-left: 74px; }
.m-caret { margin: 0 0 0 6px; border: 3px solid transparent; border-top: 4px solid #777; border-bottom: 0; }
.m-book { margin-left: 8px; }
.m-red { margin-left: 5px; width: 10px; height: 15px; border: 1px solid #e88; }
.b-tabs { height: 27px; flex: none; background: #f4f4f4; border-bottom: 1px solid #c4c4c4; display: flex; align-items: flex-end; padding-left: 120px; }
.t-old { width: 57px; height: 26px; border-right: 1px solid #c4c4c4; border-top: 1px solid #d8d8d8; display: flex; align-items: center; justify-content: flex-end; padding-right: 5px; color: #aaa; font: 16px "Liberation Sans", sans-serif; }
.t-cur { width: 223px; height: 27px; margin-bottom: -1px; margin-left: 1px; background: #fff; border: 1px solid #c4c4c4; border-bottom: 0; border-radius: 3px 3px 0 0; display: flex; align-items: center; padding-left: 5px; gap: 2px; }
.t-title { width: 175px; overflow: hidden; white-space: nowrap; font-size: 12px; color: #222; }
.t-x { margin-left: 6px; color: #999; font: 16px "Liberation Sans", sans-serif; }
.t-plus { width: 24px; height: 26px; border-right: 1px solid #d4d4d4; display: flex; align-items: center; justify-content: center; color: #888; font: bold 20px "Liberation Sans", sans-serif; }
.b-page { flex: 1; min-height: 0; display: flex; flex-direction: column; font-family: "Noto Sans CJK SC", sans-serif; }
.p-head { height: 109px; flex: none; display: flex; padding-top: 27px; }
.p-logo { width: 308px; padding-left: 143px; flex: none; font-weight: bold; color: #333; }
.p-big { font-size: 34px; line-height: 42px; }
.p-sub { font-size: 16px; line-height: 16px; margin-top: 6px; }
.p-find { flex: 1; white-space: nowrap; overflow: hidden; margin-left: 138px; }
.p-box { height: 36px; width: 200px; border: 2px solid #3a8dd2; padding: 9px 0 0 10px; color: #aaa; font-size: 12px; line-height: 14px; }
.p-hot { margin-top: 8px; color: #c22; font-size: 12px; line-height: 14px; padding-left: 10px; }
.p-bar { height: 40px; flex: none; background: #1060ac; }
.p-title { height: 64px; flex: none; margin-top: 50px; background: #f7f7f7; border-top: 1px solid #e2e2e2; border-bottom: 1px solid #e2e2e2; padding: 17px 0 0 134px; font-size: 18px; line-height: 28px; color: #666; white-space: nowrap; }
.p-stat { margin-top: 20px; height: 20px; flex: none; padding-left: 124px; font-size: 14px; line-height: 20px; color: #3a6ea5; white-space: nowrap; }
.p-q { margin-top: 18px; height: 20px; flex: none; padding-left: 133px; font-family: "Noto Sans CJK TC", sans-serif; font-size: 16px; line-height: 20px; color: #555; white-space: nowrap; }
.cad { display: block; flex: none; margin-top: 3px; }
.cr path { fill: none; stroke: #e01818; stroke-width: 1; }
.cdots circle { fill: none; stroke: #e03030; stroke-width: 1; }
.cw path { fill: none; stroke: #fff; stroke-width: 1; }
.cb path { fill: none; stroke: #9fb8dc; stroke-width: 1; }
.cg { fill: none; stroke: #aaa; stroke-width: 1; }
.ct text { fill: #fff; font-size: 15px; font-family: "Noto Sans CJK SC", sans-serif; }
.p-scroll { height: 15px; flex: none; background: #f0f0f0; }
.p-thumb { width: 299px; height: 15px; background: #c0c0c0; }
.p-status { flex: 1; border-top: 1px solid #ddd; background: #f6f6f6; overflow: hidden; display: flex; gap: 6px; padding: 3px 0 0 211px; font-size: 12px; line-height: 14px; color: #666; }
.s-box { width: 16px; height: 12px; border: 1px solid #3a9a5a; }
.s-gap { margin-left: 110px; }

/* ---------- annotation arrows ---------- */
.arrows { position: absolute; left: 0; top: 0; pointer-events: none; }
.arw { stroke: #e6100f; stroke-width: 3.5; }
```
